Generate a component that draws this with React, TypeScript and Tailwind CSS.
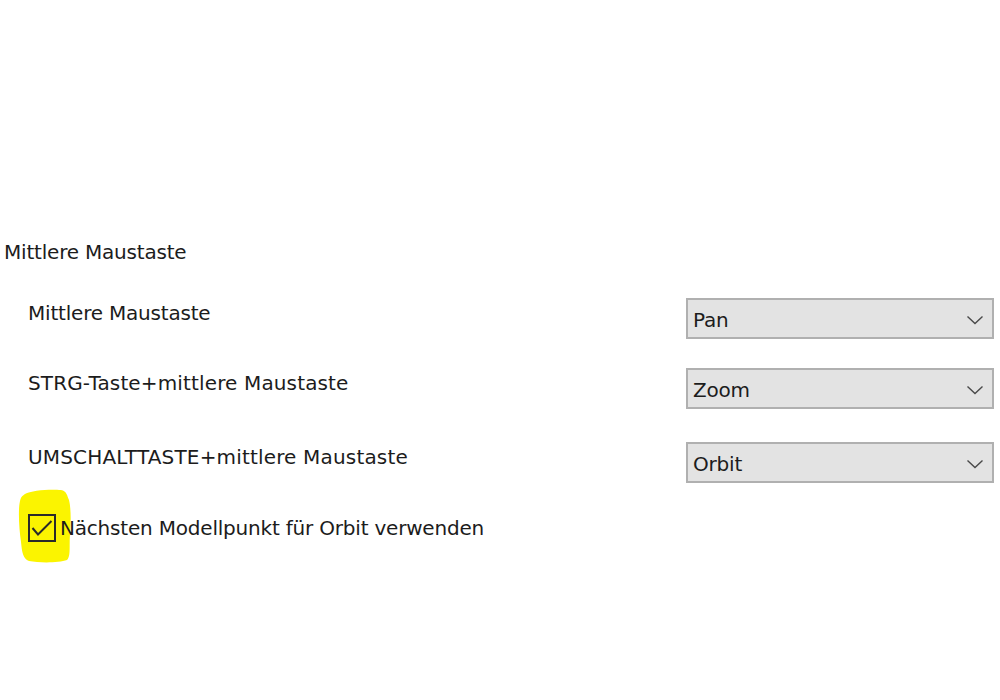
import type { ReactNode } from 'react'

type MouseRowProps = {
  label: string
  value: string
  className?: string
  labelClassName?: string
}

function Chevron() {
  return (
    <svg width="18" height="10" viewBox="0 0 18 10" className="shrink-0">
      <polyline
        points="1.5,1.5 9,8.5 16.5,1.5"
        fill="none"
        stroke="#4a4a4a"
        strokeWidth="1.4"
      />
    </svg>
  )
}

function ComboBox({ value }: { value: string }) {
  return (
    <div className="flex h-[41px] w-[308px] items-center justify-between border-2 border-[#b0b0b0] bg-[#e3e3e3] pl-[5px] pr-[8px] pt-[3px]">
      <span className="leading-[24px]">{value}</span>
      <Chevron />
    </div>
  )
}

function MouseRow({ label, value, className, labelClassName }: MouseRowProps) {
  return (
    <div className={`flex items-start justify-between ${className ?? ''}`}>
      <span className={`mt-[3px] leading-[24px] ${labelClassName ?? ''}`}>{label}</span>
      <ComboBox value={value} />
    </div>
  )
}

// freehand marker stroke behind the checkbox
function Highlight({ children }: { children: ReactNode }) {
  return (
    <div className="relative">
      <svg
        width="56"
        height="76"
        viewBox="0 0 56 76"
        className="pointer-events-none absolute left-[-11px] top-[-26px]"
      >
        <path
          d="M8 6 C14 2 34 1 44 2 C50 3 50 8 52 12 C54 20 54 34 53 46 C52 58 54 68 50 72 C42 75 22 75 12 73 C6 71 5 64 4 54 C2 40 1 22 3 13 C4 9 5 8 8 6 Z"
          fill="#fbf400"
        />
      </svg>
      <div className="relative">{children}</div>
    </div>
  )
}

export default function App() {
  return (
    <div
      className="h-[700px] w-[1000px] overflow-hidden bg-white pt-[240px] text-[20px] tracking-[-0.2px] text-[#1c1c1c]"
      style={{ fontFamily: '"DejaVu Sans", Verdana, sans-serif' }}
    >
      <div className="pl-[4px] leading-[24px]">Mittlere Maustaste</div>

      <div className="pl-[28px] pr-[6px]">
        <MouseRow className="mt-[34px]" label="Mittlere Maustaste" value="Pan" />
        <MouseRow
          className="mt-[29px]"
          labelClassName="tracking-[0.14px]"
          label="STRG-Taste+mittlere Maustaste"
          value="Zoom"
        />
        <MouseRow
          className="mt-[33px]"
          labelClassName="tracking-[0.17px]"
          label="UMSCHALTTASTE+mittlere Maustaste"
          value="Orbit"
        />

        <div className="mt-[31px] flex items-center gap-[4px]">
          <Highlight>
            <div className="h-[28px] w-[28px] border-2 border-[#2a2a2a]">
              <svg width="24" height="24" viewBox="0 0 24 24">
                <polyline
                  points="2.5,12 8,18.5 21.5,5"
                  fill="none"
                  stroke="#2a2a2a"
                  strokeWidth="2"
                />
              </svg>
            </div>
          </Highlight>
          <span className="relative leading-[24px]">Nächsten Modellpunkt für Orbit verwenden</span>
        </div>
      </div>
    </div>
  )
}
